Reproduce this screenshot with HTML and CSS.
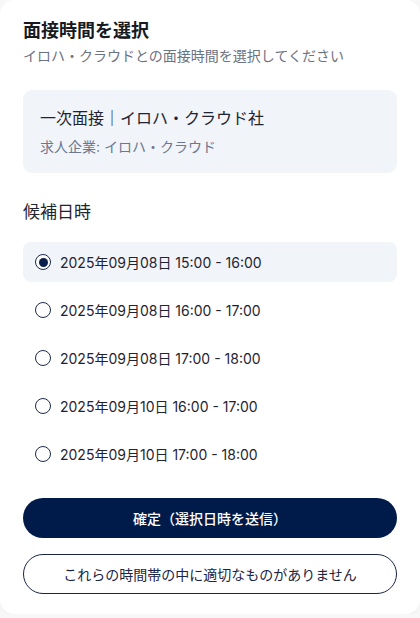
FILE: index.html
```html
<!DOCTYPE html>
<html lang="ja">
<head>
<meta charset="utf-8">
<link rel="stylesheet" href="styles.css">
</head>
<body>
<div class="card">
  <header class="head">
    <h1 class="title">面接時間を選択</h1>
    <p class="subtitle">イロハ・クラウドとの面接時間を選択してください</p>
  </header>
  <section class="info">
    <div class="info-title">一次面接｜イロハ・クラウド社</div>
    <div class="info-sub">求人企業: イロハ・クラウド</div>
  </section>
  <h2 class="section-title">候補日時</h2>
  <ul class="options">
    <li class="option selected"><span class="radio"></span><span class="opt-text">2025年09月08日 15:00 - 16:00</span></li>
    <li class="option"><span class="radio"></span><span class="opt-text">2025年09月08日 16:00 - 17:00</span></li>
    <li class="option"><span class="radio"></span><span class="opt-text">2025年09月08日 17:00 - 18:00</span></li>
    <li class="option"><span class="radio"></span><span class="opt-text">2025年09月10日 16:00 - 17:00</span></li>
    <li class="option"><span class="radio"></span><span class="opt-text">2025年09月10日 17:00 - 18:00</span></li>
  </ul>
  <div class="actions">
    <button class="btn primary">確定（選択日時を送信）</button>
    <button class="btn secondary">これらの時間帯の中に適切なものがありません</button>
  </div>
</div>
</body>
</html>
```

FILE: styles.css
```css
* { box-sizing: border-box; }
html, body { margin: 0; padding: 0; }
body {
  background: #f7f7f8;
  font-family: "Inter", "Noto Sans CJK JP", sans-serif;
  color: #1f2430;
}
.card {
  width: 420px;
  height: 614px;
  background: #ffffff;
  border-radius: 14px;
  box-shadow: 0 1px 3px rgba(0,0,0,0.04);
  padding: 19px 23px 20px;
  display: flex;
  flex-direction: column;
}
.head { display: flex; flex-direction: column; gap: 3px; }
.title {
  margin: 0;
  font-size: 18px;
  line-height: 24px;
  font-weight: 700;
  color: #171a21;
}
.subtitle {
  margin: 0;
  font-size: 14px;
  line-height: 20px;
  color: #6b7280;
}
.info {
  margin-top: 24px;
  background: #f1f4f9;
  border-radius: 9px;
  padding: 16px 17px;
  display: flex;
  flex-direction: column;
  gap: 7px;
}
.info-title { font-size: 16px; line-height: 24px; color: #1f2430; }
.info-sub { font-size: 14px; line-height: 20px; color: #6b7890; }
.section-title {
  margin: 27px 0 0;
  font-size: 17px;
  line-height: 24px;
  font-weight: 400;
  color: #1f2430;
}
.options {
  list-style: none;
  margin: 18px 0 0;
  padding: 0;
  display: flex;
  flex-direction: column;
  gap: 8px;
}
.option {
  height: 40px;
  border-radius: 8px;
  display: flex;
  align-items: center;
  padding-left: 12px;
  gap: 9px;
  font-size: 14px;
  color: #1f2430;
}
.option.selected { background: #f1f4f9; }
.radio {
  width: 16px;
  height: 16px;
  border-radius: 50%;
  border: 1.5px solid #1d2a4d;
  background: #fff;
  display: flex;
  align-items: center;
  justify-content: center;
  flex: none;
}
.selected .radio::after {
  content: "";
  width: 9px;
  height: 9px;
  border-radius: 50%;
  background: #0b1f4d;
}
.actions {
  margin-top: 24px;
  display: flex;
  flex-direction: column;
  gap: 16px;
}
.btn {
  height: 40px;
  border-radius: 20px;
  font-family: "Inter", "Noto Sans CJK JP", sans-serif;
  font-size: 14px;
  cursor: pointer;
}
.btn.primary {
  background: #001b4a;
  color: #ffffff;
  border: none;
  font-weight: 500;
}
.btn.secondary {
  background: #ffffff;
  color: #1a2545;
  border: 1px solid #1a2545;
}
```
